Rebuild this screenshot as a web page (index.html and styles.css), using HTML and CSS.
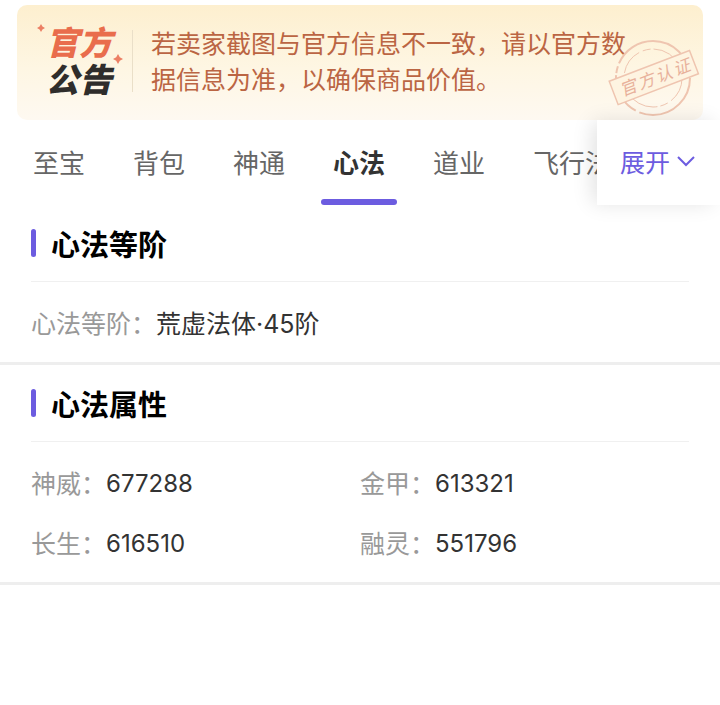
FILE: index.html
```html
<!DOCTYPE html>
<html lang="zh-CN">
<head>
<meta charset="utf-8">
<meta name="viewport" content="width=device-width, initial-scale=1">
<title>心法</title>
<link rel="stylesheet" href="styles.css">
</head>
<body>
<aside class="notice">
  <div class="notice-logo">
    <span class="logo-top">官方</span>
    <span class="logo-bottom">公告</span>
    <svg class="spark spark-small" viewBox="0 0 10 10" aria-hidden="true"><path d="M5 0 6.800 3.200 10 5 6.800 6.800 5 10 3.200 6.800 0 5 3.200 3.200Z"/></svg>
    <svg class="spark spark-large" viewBox="0 0 10 10" aria-hidden="true"><path d="M5 0 6.800 3.200 10 5 6.800 6.800 5 10 3.200 6.800 0 5 3.200 3.200Z"/></svg>
  </div>
  <p class="notice-text">若卖家截图与官方信息不一致，请以官方数据信息为准，以确保商品价值。</p>
  <svg class="stamp" viewBox="0 0 94 80" aria-hidden="true">
    <circle class="stamp-ring" cx="46" cy="40" r="37" stroke-dasharray="72 4 20 2 10 2 9 2 7 3 100 2"/>
    <circle class="stamp-inner" cx="46" cy="40" r="29" stroke-dasharray="26 4 8 3 34 6 12 3"/>
    <g transform="rotate(-21 47 40)">
      <rect class="stamp-band" x="4" y="27" width="86" height="25"/>
      <text class="stamp-text" x="11 30 49 68" y="46">官方认证</text>
    </g>
  </svg>
</aside>

<nav class="tabs">
  <div class="tab-list">
    <a class="tab" href="#">至宝</a>
    <a class="tab" href="#">背包</a>
    <a class="tab" href="#">神通</a>
    <a class="tab active" href="#" aria-current="page">心法</a>
    <a class="tab" href="#">道业</a>
    <a class="tab" href="#">飞行法</a>
  </div>
  <button class="expand" type="button">展开
    <svg class="chevron" viewBox="0 0 18 12" aria-hidden="true"><path d="M1 2 9 10 17 2"/></svg>
  </button>
</nav>

<main>
  <section class="section">
    <h2 class="section-title">心法等阶</h2>
    <dl class="fields">
      <div class="field wide"><dt>心法等阶：</dt><dd>荒虚法体·45阶</dd></div>
    </dl>
  </section>
  <section class="section">
    <h2 class="section-title">心法属性</h2>
    <dl class="fields">
      <div class="field"><dt>神威：</dt><dd class="number">677288</dd></div>
      <div class="field"><dt>金甲：</dt><dd class="number">613321</dd></div>
      <div class="field"><dt>长生：</dt><dd class="number">616510</dd></div>
      <div class="field"><dt>融灵：</dt><dd class="number">551796</dd></div>
    </dl>
  </section>
</main>
</body>
</html>
```
FILE: styles.css
```css
* {
  box-sizing: border-box;
}

body {
  margin: 0;
  padding-top: 5px;
  background: #fff;
  color: #333;
  font-family: Inter, "Noto Sans CJK SC", sans-serif;
  font-size: 25px;
}

.notice {
  position: relative;
  display: flex;
  align-items: flex-start;
  margin: 0 17px;
  padding: 21px 72px 22px 29px;
  border-radius: 10px;
  background: linear-gradient(#fdefcf, #fef6e3 55%, #fef9f1);
}

.notice-logo {
  position: relative;
  flex: none;
  display: flex;
  flex-direction: column;
  width: 87px;
  height: 62px;
  margin: 4px 18px 6px 0;
  border-right: 1px solid #eadfc8;
  font-size: 33px;
  font-style: italic;
  font-weight: 900;
  line-height: 37px;
}

.logo-top {
  margin-top: -5px;
  color: #e96d4c;
}

.logo-bottom {
  color: #2f2d2b;
}

.spark {
  position: absolute;
  fill: #ec7f64;
}

.spark-small {
  top: -6px;
  left: -9px;
  width: 8px;
  height: 8px;
}

.spark-large {
  top: 24px;
  left: 67px;
  width: 10px;
  height: 10px;
}

.notice-text {
  flex: 1;
  margin: 0;
  color: #bb6543;
  line-height: 36px;
}

.stamp {
  position: absolute;
  top: 33px;
  right: 2px;
  width: 94px;
  height: 80px;
  fill: none;
  stroke: #efc5b0;
}

.stamp-ring {
  stroke-width: 2;
}

.stamp-inner {
  stroke-width: 1;
}

.stamp-band {
  fill: #fef4e1;
  stroke-width: 1.5;
}

.stamp-text {
  fill: #e8b19b;
  stroke: none;
  font-size: 17px;
  font-style: italic;
}

.tabs {
  display: flex;
  height: 85px;
}

.tab-list {
  flex: 1;
  display: flex;
  gap: 24px;
  min-width: 0;
  padding-left: 21px;
  overflow: hidden;
}

.tab {
  position: relative;
  flex: none;
  padding: 0 12px;
  color: #666;
  font-size: 26px;
  line-height: 87px;
  text-decoration: none;
}

.tab.active {
  color: #333;
  font-weight: 700;
}

.tab.active::after {
  content: "";
  position: absolute;
  top: 79px;
  right: 0;
  left: 0;
  height: 6px;
  border-radius: 3px;
  background: #6c5ce0;
}

.expand {
  position: relative;
  flex: none;
  display: flex;
  align-items: center;
  gap: 7px;
  padding: 0 25px 3px 23px;
  border: 0;
  background: #fff;
  box-shadow: -6px 0 20px -2px rgba(0, 0, 0, 0.12);
  color: #6c5ce0;
  font: inherit;
}

.chevron {
  width: 18px;
  height: 12px;
  fill: none;
  stroke: currentColor;
  stroke-width: 2;
}

.section {
  border-bottom: 3px solid #eee;
}

.section-title {
  display: flex;
  align-items: center;
  gap: 15px;
  height: 77px;
  margin: 0 31px;
  border-bottom: 1px solid #f0f0f0;
  color: #000;
  font-size: 29px;
  font-weight: 700;
}

.section-title::before {
  content: "";
  width: 5px;
  height: 28px;
  border-radius: 3px;
  background: #6c5ce0;
}

.fields {
  display: grid;
  grid-template-columns: 1fr 1fr;
  row-gap: 24px;
  margin: 0;
  padding: 24px 31px 20px;
  line-height: 36px;
}

.field {
  display: flex;
}

.wide {
  grid-column: 1 / -1;
}

dt {
  color: #999;
}

dd {
  margin: 0;
}

.number {
  font-size: 24px;
}
```
